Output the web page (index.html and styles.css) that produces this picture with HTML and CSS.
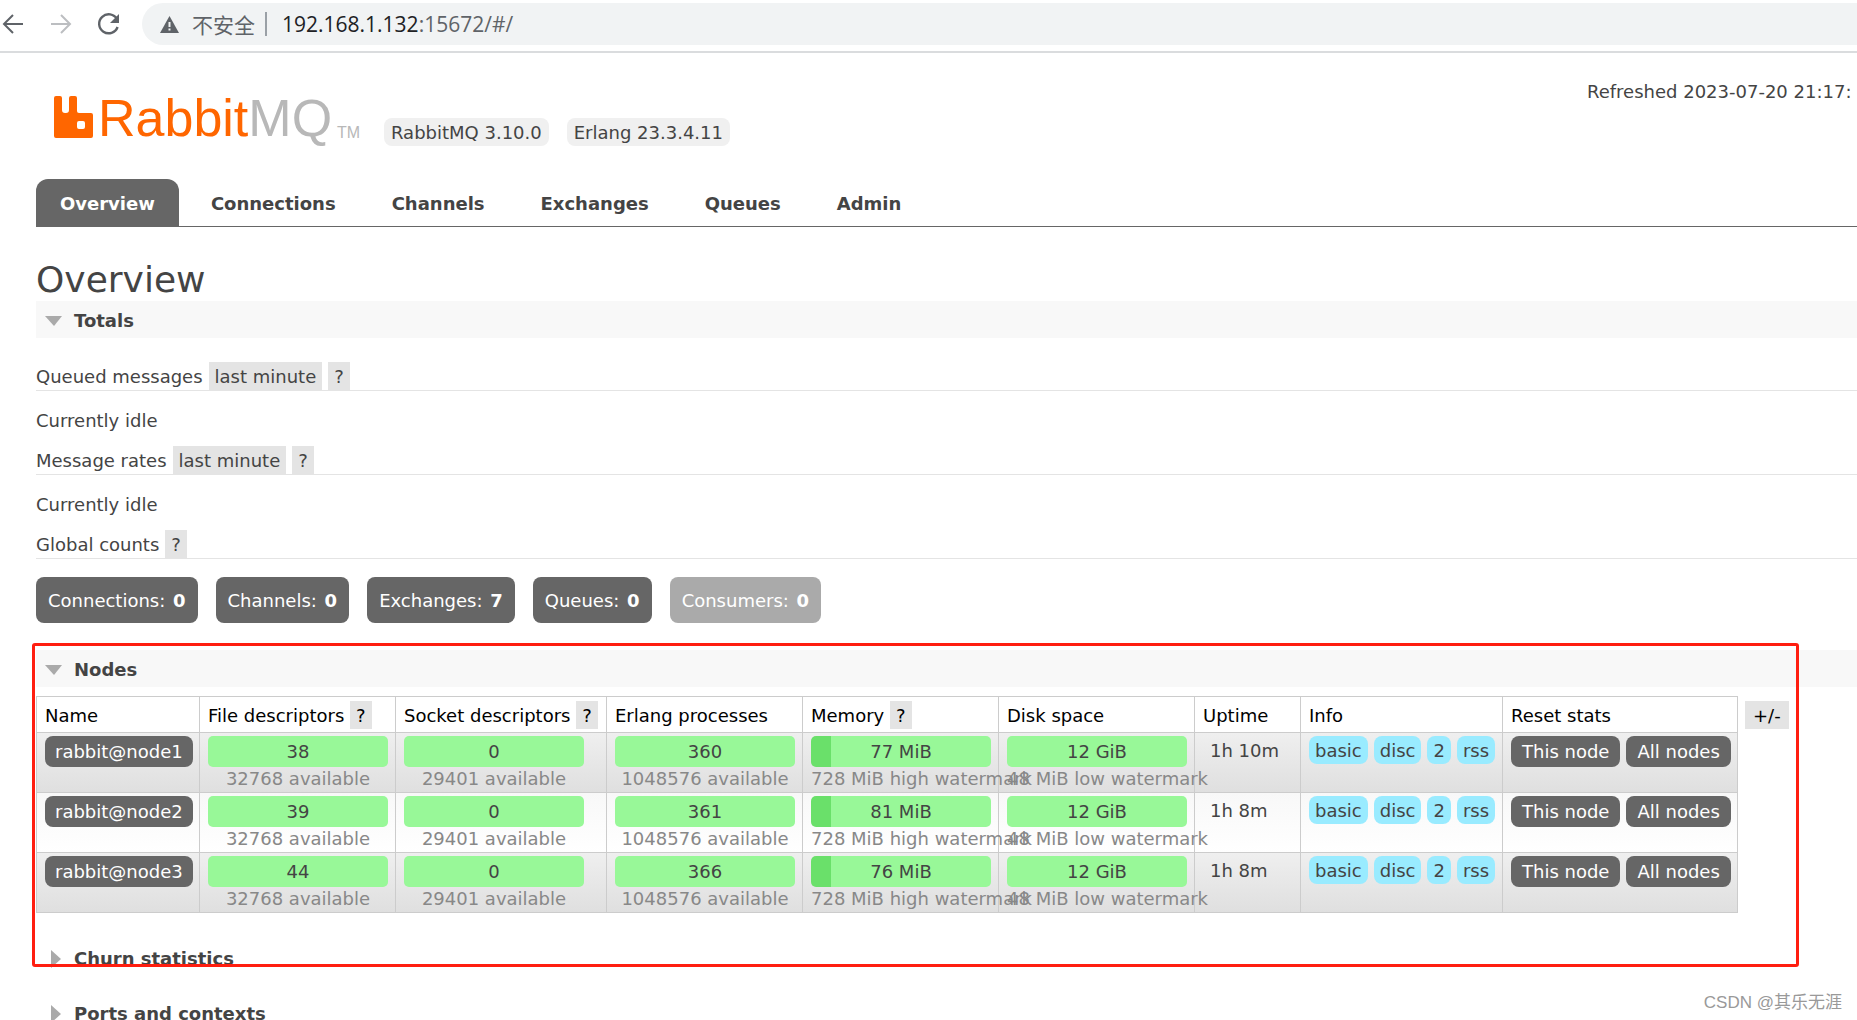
FILE: index.html
```html
<!DOCTYPE html>
<html lang="en">
<head>
<meta charset="utf-8">
<title>RabbitMQ Management</title>
<link rel="stylesheet" href="styles.css">
</head>
<body>
<div class="browser-bar">
  <button class="nav-button" aria-label="Back"><svg width="24" height="24" viewBox="0 0 24 24" fill="none" stroke="#5f6368" stroke-width="2"><path d="M23 12H4M13 3L4 12l9 9"/></svg></button>
  <button class="nav-button" aria-label="Forward"><svg width="24" height="24" viewBox="0 0 24 24" fill="none" stroke="#bcbec1" stroke-width="2"><path d="M3 12h19M13 3l9 9-9 9"/></svg></button>
  <button class="nav-button" aria-label="Reload"><svg width="24" height="24" viewBox="0 0 24 24" fill="none" stroke="#5f6368" stroke-width="2.4"><path d="M21 7.200A9.500 9.500 0 1 0 21.600 15"/><path d="M23 2v9h-9z" fill="#5f6368" stroke="none"/></svg></button>
  <div class="address">
    <svg width="19" height="17" viewBox="0 0 19 17"><path d="M9.500 0L19 17H0z" fill="#5f6368"/><path d="M8.500 6h2v5h-2zM8.500 12.500h2v2h-2z" fill="#f1f3f4"/></svg>
    <span class="insecure">不安全</span>
    <span class="divider"></span>
    <span class="url"><span class="host">192.168.1.132</span>:15672/#/</span>
  </div>
</div>
<div class="page">
  <header class="header">
    <a class="logo" href="#/">
      <svg class="logo-mark" width="39" height="42" viewBox="0 0 39 42"><path fill="#f60" fill-rule="evenodd" d="M2 0h4q2 0 2 2v12q0 3 3 3h1q3 0 3-3V2q0-2 2-2h4q2 0 2 2v13q0 2 2 2h12q2 0 2 2v21q0 2-2 2H2q-2 0-2-2V2q0-2 2-2zM25 25q-2 0-2 2v4q0 2 2 2h4q2 0 2-2v-4q0-2-2-2z"/></svg>
      <span class="logo-text">Rabbit<span class="logo-mq">MQ</span></span><span class="logo-tm">TM</span>
    </a>
    <span class="version">RabbitMQ 3.10.0</span>
    <span class="version">Erlang 23.3.4.11</span>
    <div class="refreshed">Refreshed 2023-07-20 21:17:</div>
  </header>
  <nav class="tabs">
    <a class="tab selected" href="#/">Overview</a>
    <a class="tab" href="#/connections">Connections</a>
    <a class="tab" href="#/channels">Channels</a>
    <a class="tab" href="#/exchanges">Exchanges</a>
    <a class="tab" href="#/queues">Queues</a>
    <a class="tab" href="#/users">Admin</a>
  </nav>
  <main>
    <h1>Overview</h1>
    <section>
      <h2 class="section-title open">Totals</h2>
      <div class="totals">
        <h3 class="sub"><span>Queued messages</span><button class="chip">last minute</button><button class="chip">?</button></h3>
        <p class="idle">Currently idle</p>
        <h3 class="sub"><span>Message rates</span><button class="chip">last minute</button><button class="chip">?</button></h3>
        <p class="idle">Currently idle</p>
        <h3 class="sub"><span>Global counts</span><button class="chip">?</button></h3>
      </div>
      <div class="counts">
        <a class="count" href="#/connections">Connections: <strong>0</strong></a>
        <a class="count" href="#/channels">Channels: <strong>0</strong></a>
        <a class="count" href="#/exchanges">Exchanges: <strong>7</strong></a>
        <a class="count" href="#/queues">Queues: <strong>0</strong></a>
        <span class="count disabled">Consumers: <strong>0</strong></span>
      </div>
    </section>
    <section class="nodes">
      <h2 class="section-title open">Nodes</h2>
      <div class="nodes-body">
        <table class="list">
          <colgroup><col class="c-name"><col class="c-bar"><col class="c-socket"><col class="c-bar"><col class="c-bar"><col class="c-bar"><col class="c-uptime"><col class="c-info"><col class="c-reset"></colgroup>
          <thead>
            <tr><th>Name</th><th>File descriptors <button class="chip">?</button></th><th>Socket descriptors <button class="chip">?</button></th><th>Erlang processes</th><th>Memory <button class="chip">?</button></th><th>Disk space</th><th>Uptime</th><th>Info</th><th>Reset stats</th></tr>
          </thead>
          <tbody>
            <tr>
              <td><a class="dark" href="#/nodes/1">rabbit@node1</a></td>
              <td><div class="bar">38</div><div class="limit">32768 available</div></td>
              <td><div class="bar">0</div><div class="limit">29401 available</div></td>
              <td><div class="bar">360</div><div class="limit">1048576 available</div></td>
              <td><div class="bar used">77 MiB</div><div class="limit">728 MiB high watermark</div></td>
              <td><div class="bar">12 GiB</div><div class="limit">48 MiB low watermark</div></td>
              <td class="uptime">1h 10m</td>
              <td><div class="group"><abbr>basic</abbr><abbr>disc</abbr><abbr>2</abbr><abbr>rss</abbr></div></td>
              <td><div class="group"><button class="dark">This node</button><button class="dark">All nodes</button></div></td>
            </tr>
            <tr>
              <td><a class="dark" href="#/nodes/2">rabbit@node2</a></td>
              <td><div class="bar">39</div><div class="limit">32768 available</div></td>
              <td><div class="bar">0</div><div class="limit">29401 available</div></td>
              <td><div class="bar">361</div><div class="limit">1048576 available</div></td>
              <td><div class="bar used">81 MiB</div><div class="limit">728 MiB high watermark</div></td>
              <td><div class="bar">12 GiB</div><div class="limit">48 MiB low watermark</div></td>
              <td class="uptime">1h 8m</td>
              <td><div class="group"><abbr>basic</abbr><abbr>disc</abbr><abbr>2</abbr><abbr>rss</abbr></div></td>
              <td><div class="group"><button class="dark">This node</button><button class="dark">All nodes</button></div></td>
            </tr>
            <tr>
              <td><a class="dark" href="#/nodes/3">rabbit@node3</a></td>
              <td><div class="bar">44</div><div class="limit">32768 available</div></td>
              <td><div class="bar">0</div><div class="limit">29401 available</div></td>
              <td><div class="bar">366</div><div class="limit">1048576 available</div></td>
              <td><div class="bar used">76 MiB</div><div class="limit">728 MiB high watermark</div></td>
              <td><div class="bar">12 GiB</div><div class="limit">48 MiB low watermark</div></td>
              <td class="uptime">1h 8m</td>
              <td><div class="group"><abbr>basic</abbr><abbr>disc</abbr><abbr>2</abbr><abbr>rss</abbr></div></td>
              <td><div class="group"><button class="dark">This node</button><button class="dark">All nodes</button></div></td>
            </tr>
          </tbody>
        </table>
        <button class="chip columns">+/-</button>
      </div>
      <div class="highlight"></div>
    </section>
    <h2 class="section-title closed">Churn statistics</h2>
    <h2 class="section-title closed">Ports and contexts</h2>
  </main>
</div>
<div class="watermark">CSDN @其乐无涯</div>
</body>
</html>
```
FILE: styles.css
```css
* { box-sizing: border-box; }

body {
  position: relative;
  height: 100vh;
  margin: 0;
  overflow: hidden;
  background: #fff;
  color: #444;
  font: 18px/28px Verdana, "DejaVu Sans", sans-serif;
}

button { border: 0; margin: 0; font: inherit; color: inherit; }
a { color: inherit; text-decoration: none; }
h1, h2, h3, p { margin: 0; font-weight: normal; }

/* browser toolbar */
.browser-bar {
  display: flex;
  align-items: center;
  gap: 24px;
  height: 53px;
  padding-bottom: 3px;
  border-bottom: 2px solid #dadcde;
}
.nav-button { display: flex; width: 24px; padding: 0; background: none; }
.address {
  display: flex;
  flex: 1;
  align-items: center;
  height: 42px;
  margin-left: -2px;
  padding-left: 18px;
  border-radius: 21px 0 0 21px;
  background: #f1f3f4;
}
.insecure {
  margin-left: 13px;
  color: #5f6368;
  font: 21px/28px "Noto Sans CJK SC", sans-serif;
}
.divider { width: 2px; height: 24px; margin: 0 15px 0 10px; background: #9aa0a6; }
.url { color: #5f6368; font: 21px/28px "Open Sans", sans-serif; }
.host { color: #202124; }

/* header */
.page { padding-left: 36px; }
.header { display: flex; height: 126px; }
.logo { display: flex; width: 330px; padding: 43px 0 0 18px; color: #f60; }
.logo-mark { flex: none; }
.logo-text {
  margin-left: 5px;
  font: 52px/44px "Liberation Sans", sans-serif;
}
.logo-mq { color: #b8b8b8; }
.logo-tm {
  margin: 27px 0 0 5px;
  color: #b8b8b8;
  font: 16px/20px "Liberation Sans", sans-serif;
}
.version {
  height: 28px;
  margin: 65px 0 0 18px;
  padding: 1px 7px 0;
  border-radius: 8px;
  background: #f0f0f0;
}
.refreshed {
  width: 270px;
  margin: 25px 0 0 auto;
  overflow: hidden;
  white-space: nowrap;
}

/* tabs */
.tabs { display: flex; gap: 8px; height: 48px; border-bottom: 1px solid #666; }
.tab {
  padding: 2px 24px 0;
  border-radius: 12px 12px 0 0;
  font-weight: bold;
  line-height: 46px;
}
.selected { background: #666; color: #fff; }

h1 { padding-top: 32px; font-size: 36px; line-height: 42px; }

.section-title {
  display: flex;
  align-items: center;
  height: 37px;
  padding-top: 2px;
  font-size: 18px;
  font-weight: bold;
}
.section-title::before { content: ""; }
.open { background: #f8f8f8; }
.open::before {
  margin: 0 12px 0 9px;
  border-top: 10px solid #aaa;
  border-left: 9px solid transparent;
  border-right: 8px solid transparent;
}
.closed { margin-bottom: 18px; }
.closed::before {
  margin: 0 13px 0 15px;
  border-left: 10px solid #aaa;
  border-top: 9px solid transparent;
  border-bottom: 9px solid transparent;
}

/* totals */
.totals { padding-top: 24px; }
.sub { display: flex; gap: 6px; border-bottom: 1px solid #e4e4e4; font-size: 18px; }
.sub span { padding-top: 1px; line-height: 27px; }
.chip { height: 28px; padding: 1px 6px 0; background: #e4e4e4; line-height: 27px; }
.idle { padding: 16px 0 11px; }
.counts { display: flex; gap: 18px; padding: 18px 0 27px; }
.count {
  padding: 1px 12px 0;
  border-radius: 8px;
  background: #666;
  color: #fff;
  line-height: 45px;
}
.count strong { margin-left: 2px; }
.disabled { background: #aaa; }

/* nodes */
.nodes { position: relative; margin-bottom: 26px; }
.nodes-body { display: flex; align-items: flex-start; gap: 7px; padding-top: 9px; }
.columns { margin-top: 5px; padding: 1px 8px 0; color: #000; }
.list { width: 1702px; border-collapse: collapse; table-layout: fixed; }
.c-name { width: 163px; }
.c-bar { width: 196px; }
.c-socket { width: 211px; }
.c-uptime { width: 106px; }
.c-info { width: 202px; }
.c-reset { width: 235px; }
.list th, .list td {
  border: 1px solid #ccc;
  text-align: left;
  vertical-align: top;
  white-space: nowrap;
}
.list th { padding: 5px 8px 2px; color: #000; font-weight: normal; }
.list th .chip { margin-top: -1px; vertical-align: top; }
.list tbody tr { height: 60px; background: linear-gradient(#f8f8f8, #fff); }
.list tbody tr:nth-child(odd) { background: linear-gradient(#efefef, #dfdfdf); }
.list td { padding: 3px 8px 0; }
.list .uptime { padding: 4px 0 0 15px; }
.dark {
  display: inline-block;
  height: 31px;
  padding: 0 10px;
  border-radius: 8px;
  background: #666;
  color: #fff;
  line-height: 31px;
}
.group .dark { padding: 0 11px; }
.bar {
  width: 180px;
  border-radius: 5px;
  background: #98f898;
  line-height: 31px;
  text-align: center;
}
.used { background: linear-gradient(90deg, #6ae06a 20px, #98f898 20px); }
.limit { width: 180px; color: #888; line-height: 24px; text-align: center; }
.group { display: flex; align-items: flex-start; gap: 6px; }
abbr { padding: 1px 6px 0; border-radius: 8px; background: #99ebff; line-height: 27px; }

.highlight {
  position: absolute;
  top: -7px;
  left: -4px;
  right: 58px;
  height: 324px;
  border: 3px solid #ff1e10;
  border-radius: 3px;
}
.watermark {
  position: absolute;
  right: 15px;
  bottom: 3px;
  color: #999;
  font: 17px/28px "Liberation Sans", "Noto Sans CJK SC", sans-serif;
}
```
